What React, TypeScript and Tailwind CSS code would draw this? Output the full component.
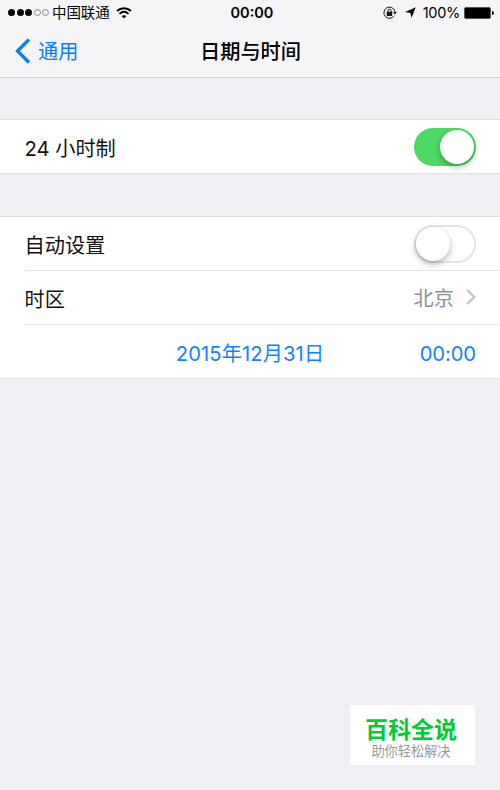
import type { ReactNode } from 'react'

interface SwitchProps {
  checked: boolean
}

function Switch({ checked }: SwitchProps) {
  return (
    <button
      role="switch"
      aria-checked={checked}
      className={`flex h-[38px] w-[62px] items-center rounded-full ${
        checked
          ? 'justify-end bg-[#4cd964] pr-[2px]'
          : 'justify-start border-2 border-[#e5e5e5] bg-white'
      }`}
    >
      <span className="h-[34px] w-[34px] rounded-full bg-white shadow-[0_3px_6px_rgba(0,0,0,0.3)]" />
    </button>
  )
}

function WifiIcon() {
  return (
    <svg width="16" height="12" viewBox="0 0 16 12" fill="none" stroke="#000">
      <path d="M1 4C5 0.3 11 0.3 15 4" strokeWidth="2" />
      <path d="M3.5 6.8C6.2 4.4 9.8 4.4 12.5 6.8" strokeWidth="1.8" />
      <path d="M8 11.5L5.6 9.1C7 7.9 9 7.9 10.4 9.1Z" fill="#000" stroke="none" />
    </svg>
  )
}

function RotationLockIcon() {
  return (
    <svg width="14" height="14" viewBox="0 0 14 14" fill="none" stroke="#111">
      <path d="M11.3 9.6A5.6 5.6 0 1 1 11.9 5.2" strokeWidth="1" />
      <path d="M10 5.7H13.8L11.9 8.4Z" fill="#111" stroke="none" />
      <path d="M4.9 6.3V4.8a1.6 1.6 0 0 1 3.2 0V6.3" strokeWidth="1" />
      <rect x="3.8" y="5.8" width="5.4" height="4.2" rx="0.4" fill="#111" stroke="none" />
    </svg>
  )
}

function LocationIcon() {
  return (
    <svg width="11" height="11" viewBox="0 0 11 11" fill="#000">
      <path d="M10.8 0.2L6.5 10.8L5.4 6L0.2 5Z" />
    </svg>
  )
}

function StatusBar() {
  return (
    <div className="grid h-[25px] grid-cols-3 items-center text-[14.5px] text-black">
      <div className="flex items-center pl-2">
        <div className="flex gap-[1.5px]">
          {[true, true, true, false, false].map((filled, i) => (
            <span
              key={i}
              className={`h-[7px] w-[7px] rounded-full ${filled ? 'bg-black' : 'border border-[#888]'}`}
            />
          ))}
        </div>
        <span className="mr-[6px] ml-[3px] pt-[2px] tracking-[-0.1px] whitespace-nowrap">中国联通</span>
        <WifiIcon />
      </div>
      <div className="pt-[2px] pl-[4px] text-center font-semibold">00:00</div>
      <div className="flex items-center justify-end pr-[6px]">
        <RotationLockIcon />
        <span className="mr-[7px] ml-[8px]">
          <LocationIcon />
        </span>
        <span className="pt-[2px] tracking-[-0.3px]">100%</span>
        <span className="ml-[4px] h-[12px] w-[27px] rounded-[2px] border border-[#555] bg-black" />
        <span className="ml-px h-[4px] w-[2px] rounded-r-full bg-black" />
      </div>
    </div>
  )
}

function NavBar() {
  return (
    <div className="grid h-[52px] grid-cols-3 items-center text-[20.2px]">
      <button className="flex items-center pl-[15px] text-[#0a7cff]">
        <svg width="16" height="26" viewBox="0 0 16 26" fill="none" stroke="currentColor" strokeWidth="3.3">
          <path d="M14 1.5L2.5 13L14 24.5" />
        </svg>
        <span className="ml-[7px] pt-[2px]">通用</span>
      </button>
      <h1 className="pt-[2px] pl-px text-center font-medium text-black">日期与时间</h1>
    </div>
  )
}

function Row({ label, last, children }: { label: string; last?: boolean; children: ReactNode }) {
  return (
    <div className="pl-[24.5px]">
      <div
        className={`flex items-center justify-between pr-6 ${last ? 'h-[53px]' : 'h-[54px] border-b border-[#e2e2e4]'}`}
      >
        <span className="pt-[5px]">{label}</span>
        {children}
      </div>
    </div>
  )
}

export default function App() {
  return (
    <div className="relative h-[790px] w-[500px] overflow-hidden bg-[#efeff4] font-['Inter','Noto_Sans_CJK_SC',sans-serif] text-[20.2px] leading-none text-[#111]">
      <header className="h-[78px] border-b border-[#d5d5d8] bg-[#f5f5f7]">
        <StatusBar />
        <NavBar />
      </header>

      <section className="mt-[41px] border-y border-[#e0e0e4] bg-white">
        <Row label="24 小时制" last>
          <Switch checked />
        </Row>
      </section>

      <section className="mt-[42px] border-y border-[#e0e0e4] bg-white">
        <Row label="自动设置">
          <Switch checked={false} />
        </Row>
        <Row label="时区">
          <div className="flex items-center text-[#8e8e93]">
            <span className="pt-[4px]">北京</span>
            <svg className="ml-[12px]" width="10" height="16" viewBox="0 0 10 16" fill="none" stroke="#c2c2c6" strokeWidth="2.2">
              <path d="M1 1L8.5 8L1 15" />
            </svg>
          </div>
        </Row>
        <div className="grid h-[53px] grid-cols-3 items-center pt-[5px] text-[#1580ff]">
          <span className="col-start-2 text-center tracking-[0.1px] whitespace-nowrap">2015年12月31日</span>
          <span className="pr-6 text-right tracking-[-0.1px]">00:00</span>
        </div>
      </section>

      {/* Corner badge */}
      <div className="absolute top-[705px] left-[350px] flex h-[60px] w-[125px] flex-col items-center bg-white pt-[14px] pr-[3px]">
        <span className="text-[23px] font-bold text-[#00cb34]">百科全说</span>
        <span className="mt-[3px] text-[13.2px] text-[#999]">助你轻松解决</span>
      </div>
    </div>
  )
}
